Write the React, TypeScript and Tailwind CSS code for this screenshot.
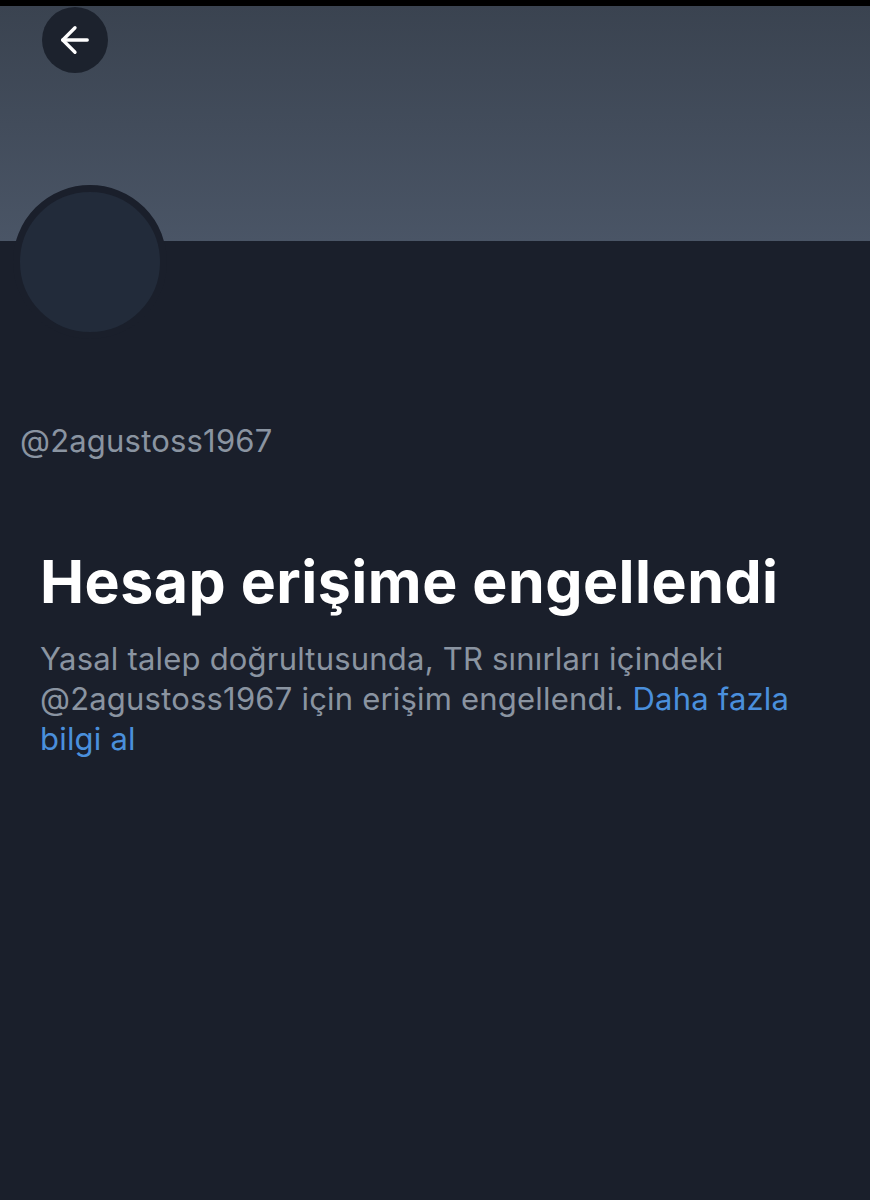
import { ArrowLeft } from "lucide-react";

const handle = "@2agustoss1967";

export default function App() {
  return (
    <main className="flex min-h-[1200px] w-[870px] flex-col bg-[#1a1f2b] font-['Inter',sans-serif]">
      <div className="h-[6px] bg-black" />
      <header className="relative h-[235px] bg-gradient-to-b from-[#3a4350] to-[#4a5566]">
        <button className="absolute left-[42px] top-[1px] flex h-[66px] w-[66px] items-center justify-center rounded-full bg-[#1c222d]">
          <ArrowLeft className="h-[42px] w-[42px] text-white" strokeWidth={1.9} />
        </button>
        <div className="absolute left-[13px] top-[179px] h-[154px] w-[154px] rounded-full border-[7px] border-[#1a1f2b] bg-[#222b3a]" />
      </header>

      <section className="px-5 pt-[182px]">
        <p className="text-[31px] leading-[36px] tracking-[0.2px] text-[#8a94a1]">{handle}</p>
      </section>

      <section className="px-10 pt-[91px]">
        <h1 className="text-[59px] font-bold leading-[64px] tracking-[0.5px] text-white">
          Hesap erişime engellendi
        </h1>
        <p className="mt-[25px] text-[31px] leading-[40px] tracking-[0.2px] text-[#8a94a1]">
          Yasal talep doğrultusunda, TR sınırları içindeki {handle} için erişim engellendi.{" "}
          <a className="text-[#4a8fdc]">Daha fazla bilgi al</a>
        </p>
      </section>
    </main>
  );
}
